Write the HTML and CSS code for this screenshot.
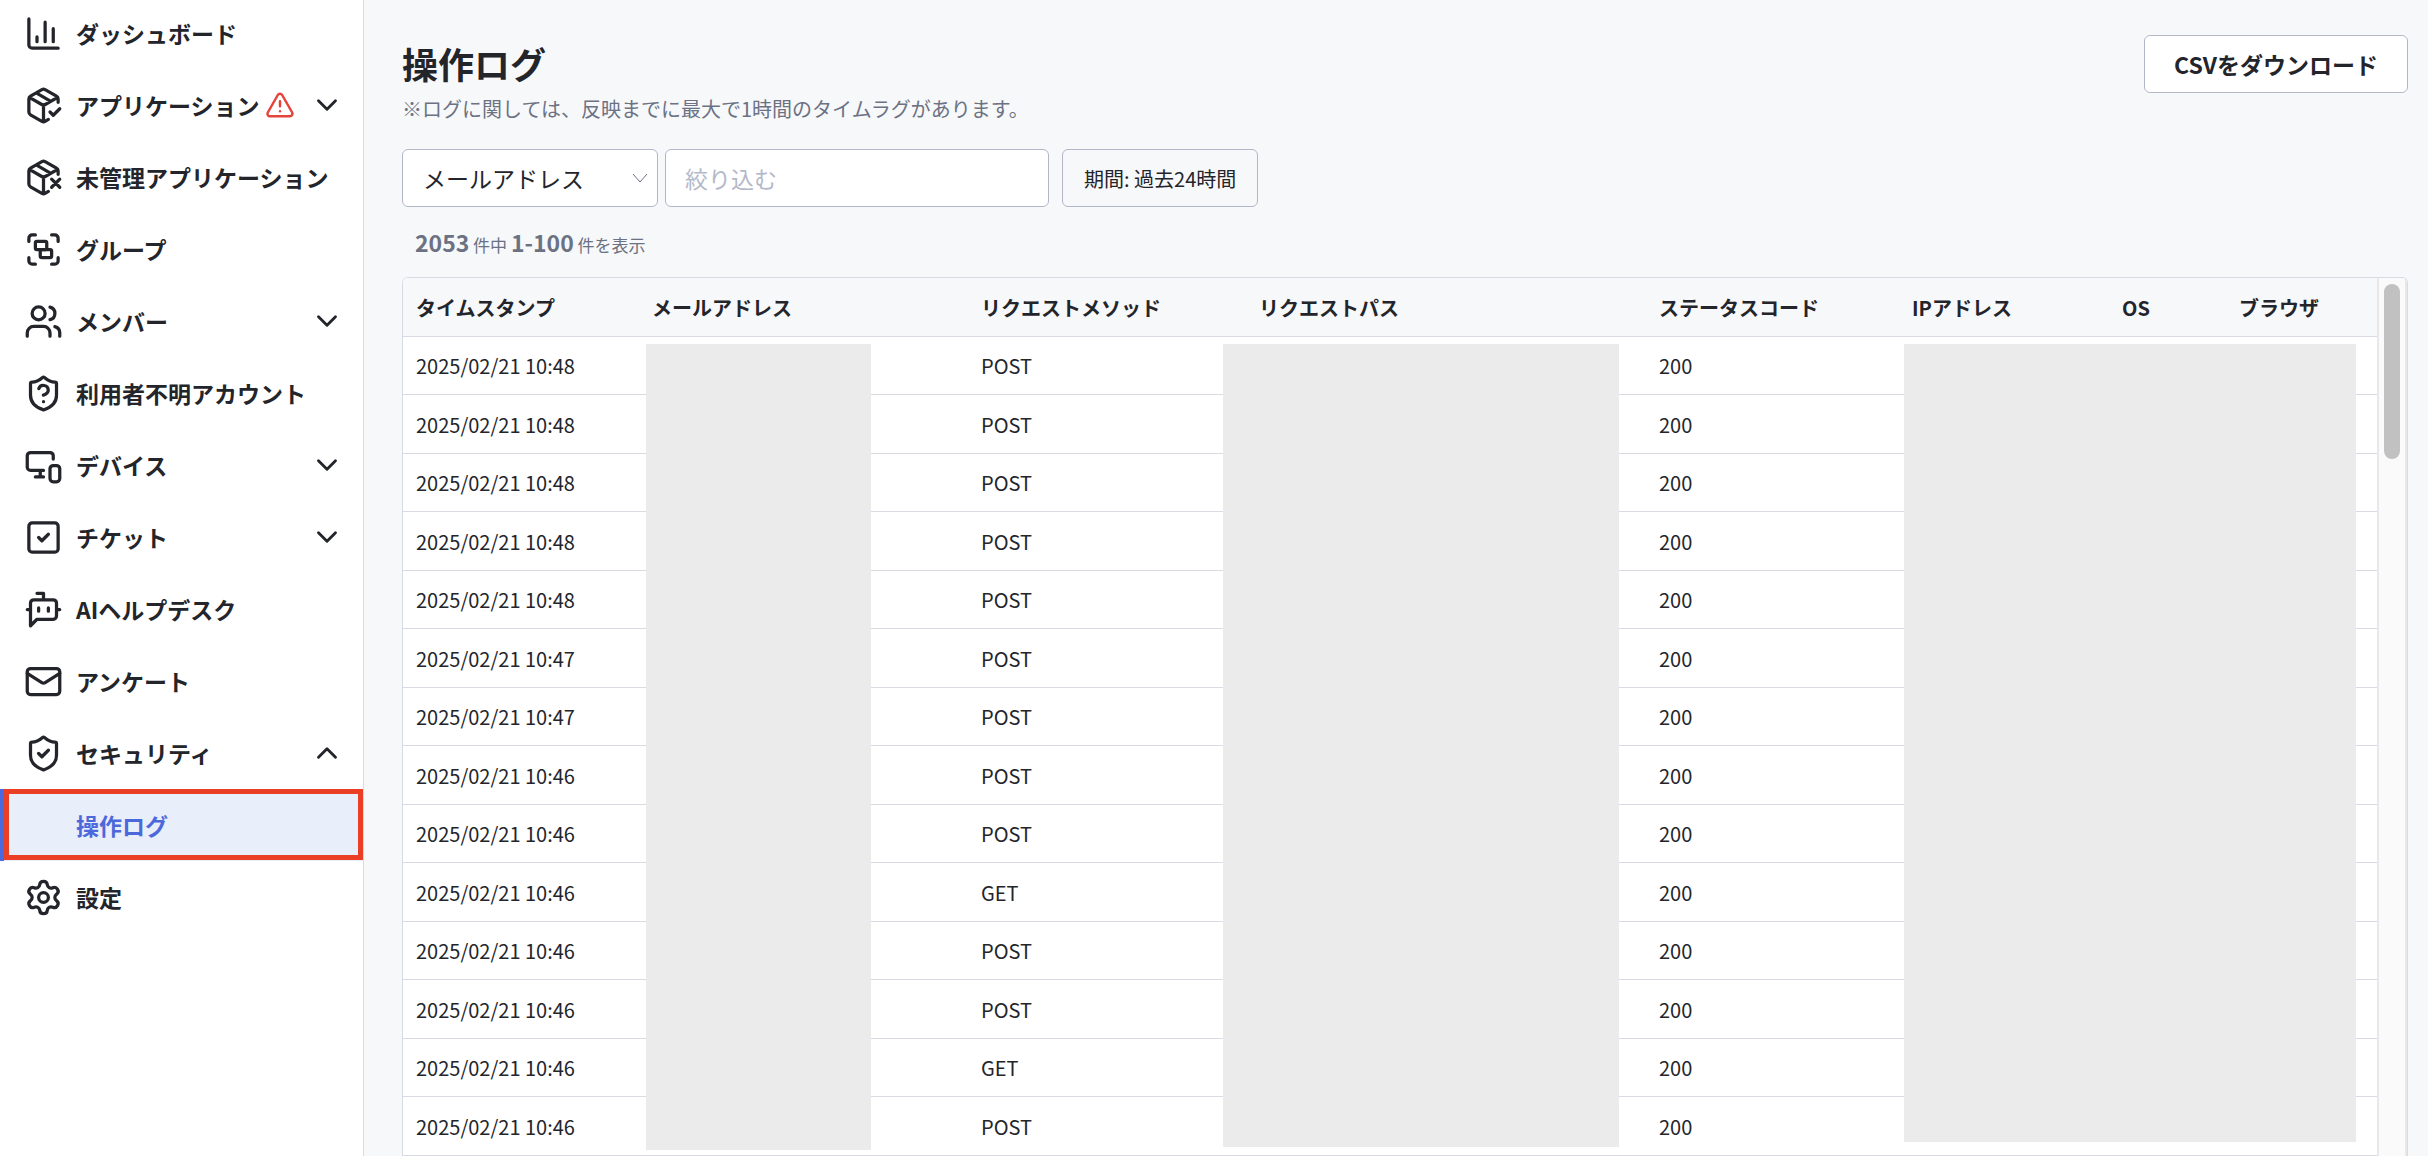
FILE: index.html
```html
<!DOCTYPE html>
<html lang="ja">
<head>
  <meta charset="UTF-8">
  <meta name="viewport" content="width=device-width, initial-scale=1.0">
  <title>操作ログ</title>
  <link rel="stylesheet" href="styles.css">
</head>
<body>
  <div class="layout">
    <!-- サイドバー -->
    <nav class="sidebar">
      <ul class="menu">
        <li>
          <a class="menu-item" href="#">
            <svg class="icon" viewBox="0 0 24 24"><path d="M3 3v16a2 2 0 0 0 2 2h16M18 17V9M13 17V5M8 17v-3"/></svg>
            <span>ダッシュボード</span>
          </a>
        </li>
        <li>
          <a class="menu-item" href="#">
            <svg class="icon" viewBox="0 0 24 24"><path d="m16 16 2 2 4-4M21 10V8a2 2 0 0 0-1-1.73l-7-4a2 2 0 0 0-2 0l-7 4A2 2 0 0 0 3 8v8a2 2 0 0 0 1 1.73l7 4a2 2 0 0 0 2 0l2-1.14M7.5 4.27l9 5.15M3.29 7 12 12l8.71-5M12 22V12"/></svg>
            <span>アプリケーション</span>
            <svg class="icon-alert" viewBox="0 0 24 24"><path d="m21.73 18-8-14a2 2 0 0 0-3.48 0l-8 14A2 2 0 0 0 4 21h16a2 2 0 0 0 1.73-3M12 9v4M12 17h.01"/></svg>
            <svg class="chevron" viewBox="0 0 24 24"><path d="m6 9 6 6 6-6"/></svg>
          </a>
        </li>
        <li>
          <a class="menu-item" href="#">
            <svg class="icon" viewBox="0 0 24 24"><path d="M21 10V8a2 2 0 0 0-1-1.73l-7-4a2 2 0 0 0-2 0l-7 4A2 2 0 0 0 3 8v8a2 2 0 0 0 1 1.73l7 4a2 2 0 0 0 2 0l2-1.14M7.5 4.27l9 5.15M3.29 7 12 12l8.71-5M12 22V12M17 13l5 5M17 18l5-5"/></svg>
            <span>未管理アプリケーション</span>
          </a>
        </li>
        <li>
          <a class="menu-item" href="#">
            <svg class="icon" viewBox="0 0 24 24"><path d="M3 7V5c0-1.1.9-2 2-2h2M17 3h2c1.1 0 2 .9 2 2v2M21 17v2c0 1.1-.9 2-2 2h-2M7 21H5c-1.1 0-2-.9-2-2v-2"/><rect x="7" y="7" width="7" height="5" rx="1"/><rect x="10" y="12" width="7" height="5" rx="1"/></svg>
            <span>グループ</span>
          </a>
        </li>
        <li>
          <a class="menu-item" href="#">
            <svg class="icon" viewBox="0 0 24 24"><path d="M16 21v-2a4 4 0 0 0-4-4H6a4 4 0 0 0-4 4v2M22 21v-2a4 4 0 0 0-3-3.87M16 3.13a4 4 0 0 1 0 7.75"/><circle cx="9" cy="7" r="4"/></svg>
            <span>メンバー</span>
            <svg class="chevron" viewBox="0 0 24 24"><path d="m6 9 6 6 6-6"/></svg>
          </a>
        </li>
        <li>
          <a class="menu-item" href="#">
            <svg class="icon" viewBox="0 0 24 24"><path d="M20 13c0 5-3.500 7.500-7.660 8.950a1 1 0 0 1-.67-.01C7.500 20.500 4 18 4 13V6a1 1 0 0 1 1-1c2 0 4.500-1.200 6.240-2.720a1.170 1.170 0 0 1 1.520 0C14.510 3.810 17 5 19 5a1 1 0 0 1 1 1zM9.100 9a3 3 0 0 1 5.820 1c0 2-3 3-3 3M12 17h.01"/></svg>
            <span>利用者不明アカウント</span>
          </a>
        </li>
        <li>
          <a class="menu-item" href="#">
            <svg class="icon" viewBox="0 0 24 24"><path d="M18 8V6a2 2 0 0 0-2-2H4a2 2 0 0 0-2 2v7a2 2 0 0 0 2 2h8M10 19v-4M7 19h5"/><rect x="16" y="12" width="6" height="10" rx="2"/></svg>
            <span>デバイス</span>
            <svg class="chevron" viewBox="0 0 24 24"><path d="m6 9 6 6 6-6"/></svg>
          </a>
        </li>
        <li>
          <a class="menu-item" href="#">
            <svg class="icon" viewBox="0 0 24 24"><rect x="3" y="3" width="18" height="18" rx="2"/><path d="m9 12 2 2 4-4"/></svg>
            <span>チケット</span>
            <svg class="chevron" viewBox="0 0 24 24"><path d="m6 9 6 6 6-6"/></svg>
          </a>
        </li>
        <li>
          <a class="menu-item" href="#">
            <svg class="icon" viewBox="0 0 24 24"><path d="M12 6V2H8M8 18l-4 4V8a2 2 0 0 1 2-2h12a2 2 0 0 1 2 2v8a2 2 0 0 1-2 2ZM2 12h2M9 11v2M15 11v2M20 12h2"/></svg>
            <span>AIヘルプデスク</span>
          </a>
        </li>
        <li>
          <a class="menu-item" href="#">
            <svg class="icon" viewBox="0 0 24 24"><rect x="2" y="4" width="20" height="16" rx="2"/><path d="m22 7-8.970 5.700a1.940 1.940 0 0 1-2.060 0L2 7"/></svg>
            <span>アンケート</span>
          </a>
        </li>
        <li>
          <a class="menu-item" href="#">
            <svg class="icon" viewBox="0 0 24 24"><path d="M20 13c0 5-3.500 7.500-7.660 8.950a1 1 0 0 1-.67-.01C7.500 20.500 4 18 4 13V6a1 1 0 0 1 1-1c2 0 4.500-1.200 6.240-2.720a1.170 1.170 0 0 1 1.520 0C14.510 3.810 17 5 19 5a1 1 0 0 1 1 1zM9 12l2 2 4-4"/></svg>
            <span>セキュリティ</span>
            <svg class="chevron" viewBox="0 0 24 24"><path d="m6 15 6-6 6 6"/></svg>
          </a>
          <ul class="submenu">
            <li><a class="menu-item active" href="#">操作ログ</a></li>
          </ul>
        </li>
        <li>
          <a class="menu-item" href="#">
            <svg class="icon" viewBox="0 0 24 24"><path d="M9.671 4.136a2.34 2.34 0 0 1 4.659 0 2.34 2.34 0 0 0 3.319 1.915 2.34 2.34 0 0 1 2.33 4.033 2.34 2.34 0 0 0 0 3.831 2.34 2.34 0 0 1-2.33 4.033 2.34 2.34 0 0 0-3.319 1.915 2.34 2.34 0 0 1-4.659 0 2.34 2.34 0 0 0-3.32-1.915 2.34 2.34 0 0 1-2.33-4.033 2.34 2.34 0 0 0 0-3.831A2.34 2.34 0 0 1 6.35 6.051a2.34 2.34 0 0 0 3.319-1.915"/><circle cx="12" cy="12" r="3"/></svg>
            <span>設定</span>
          </a>
        </li>
      </ul>
    </nav>

    <!-- メイン -->
    <main class="content">
      <header class="page-header">
        <div>
          <h1>操作ログ</h1>
          <p class="note">※ログに関しては、反映までに最大で1時間のタイムラグがあります。</p>
        </div>
        <button type="button" class="btn btn-csv">CSVをダウンロード</button>
      </header>

      <form class="filters">
        <div class="select-box">
          <select aria-label="検索項目">
            <option>メールアドレス</option>
          </select>
          <svg class="select-arrow" viewBox="0 0 16 16"><path d="m1 4 7 8 7-8"/></svg>
        </div>
        <input type="text" class="keyword" placeholder="絞り込む" aria-label="絞り込む">
        <button type="button" class="btn btn-period">期間: 過去24時間</button>
      </form>

      <p class="count"><strong>2053</strong> 件中 <strong>1-100</strong> 件を表示</p>

      <div class="table-box">
        <div class="table-scroll">
          <table>
            <colgroup>
              <col class="col-time">
              <col class="col-mail">
              <col class="col-method">
              <col class="col-path">
              <col class="col-status">
              <col class="col-ip">
              <col class="col-os">
              <col>
            </colgroup>
            <thead>
              <tr>
                <th>タイムスタンプ</th>
                <th>メールアドレス</th>
                <th>リクエストメソッド</th>
                <th>リクエストパス</th>
                <th>ステータスコード</th>
                <th>IPアドレス</th>
                <th>OS</th>
                <th>ブラウザ</th>
              </tr>
            </thead>
            <tbody>
              <tr><td>2025/02/21 10:48</td><td></td><td>POST</td><td></td><td>200</td><td></td><td></td><td></td></tr>
              <tr><td>2025/02/21 10:48</td><td></td><td>POST</td><td></td><td>200</td><td></td><td></td><td></td></tr>
              <tr><td>2025/02/21 10:48</td><td></td><td>POST</td><td></td><td>200</td><td></td><td></td><td></td></tr>
              <tr><td>2025/02/21 10:48</td><td></td><td>POST</td><td></td><td>200</td><td></td><td></td><td></td></tr>
              <tr><td>2025/02/21 10:48</td><td></td><td>POST</td><td></td><td>200</td><td></td><td></td><td></td></tr>
              <tr><td>2025/02/21 10:47</td><td></td><td>POST</td><td></td><td>200</td><td></td><td></td><td></td></tr>
              <tr><td>2025/02/21 10:47</td><td></td><td>POST</td><td></td><td>200</td><td></td><td></td><td></td></tr>
              <tr><td>2025/02/21 10:46</td><td></td><td>POST</td><td></td><td>200</td><td></td><td></td><td></td></tr>
              <tr><td>2025/02/21 10:46</td><td></td><td>POST</td><td></td><td>200</td><td></td><td></td><td></td></tr>
              <tr><td>2025/02/21 10:46</td><td></td><td>GET</td><td></td><td>200</td><td></td><td></td><td></td></tr>
              <tr><td>2025/02/21 10:46</td><td></td><td>POST</td><td></td><td>200</td><td></td><td></td><td></td></tr>
              <tr><td>2025/02/21 10:46</td><td></td><td>POST</td><td></td><td>200</td><td></td><td></td><td></td></tr>
              <tr><td>2025/02/21 10:46</td><td></td><td>GET</td><td></td><td>200</td><td></td><td></td><td></td></tr>
              <tr><td>2025/02/21 10:46</td><td></td><td>POST</td><td></td><td>200</td><td></td><td></td><td></td></tr>
            </tbody>
          </table>
          <!-- 個人情報のマスク -->
          <div class="mask mask-mail"></div>
          <div class="mask mask-path"></div>
          <div class="mask mask-client"></div>
        </div>
        <div class="scrollbar"><div class="scrollbar-thumb"></div></div>
      </div>
    </main>
  </div>
</body>
</html>
```

FILE: styles.css
```css
:root {
  --text: #23252b;
  --sub-text: #6b7283;
  --bg: #f7f8fa;
  --white: #ffffff;
  --border: #d8dbe3;
  --control-border: #b2b7c8;
  --primary: #4c68db;
  --primary-bg: #e8eefa;
  --danger: #e5443b;
  --mark: #ea3f25;
  --mask: #ebebeb;
}

* {
  margin: 0;
  padding: 0;
  box-sizing: border-box;
}

body {
  font-family: "Noto Sans CJK JP", "Noto Sans", sans-serif;
  font-size: 20px;
  color: var(--text);
  background-color: var(--bg);
}

.layout {
  display: flex;
  height: 100vh;
  overflow: hidden;
}

/* サイドバー */
.sidebar {
  flex: 0 0 364px;
  background-color: var(--white);
  border-right: 1px solid var(--border);
}

.menu {
  margin-top: -3px;
  list-style: none;
}

.submenu {
  list-style: none;
}

.menu-item {
  display: flex;
  align-items: center;
  gap: 13px;
  height: 72px;
  padding: 0 19px 0 24px;
  font-size: 23px;
  font-weight: 700;
  color: var(--text);
  text-decoration: none;
  white-space: nowrap;
}

.menu-item svg {
  flex: none;
  fill: none;
  stroke: currentColor;
  stroke-width: 2;
  stroke-linecap: round;
  stroke-linejoin: round;
}

.icon {
  width: 39px;
  height: 39px;
}

.menu-item .icon-alert {
  width: 30px;
  height: 30px;
  margin-left: -8px;
  color: var(--danger);
}

.menu-item .chevron {
  width: 34px;
  height: 34px;
  margin-left: auto;
}

.menu-item.active {
  position: relative;
  padding-left: 72px;
  color: var(--primary);
  background-color: var(--primary-bg);
  border-left: 4px solid var(--primary);
}

.menu-item.active::after {
  content: '';
  position: absolute;
  inset: 0 0 1px;
  border: 5px solid var(--mark);
}

/* メイン */
.content {
  flex: 1;
  min-width: 0;
  display: flex;
  flex-direction: column;
  padding: 35px 20px 0 38px;
}

.page-header {
  display: flex;
  justify-content: space-between;
  align-items: flex-start;
}

h1 {
  font-size: 36px;
  line-height: 56px;
}

.note {
  line-height: 36px;
  color: var(--sub-text);
}

.btn {
  height: 58px;
  border: 1px solid var(--control-border);
  border-radius: 6px;
  font-family: inherit;
  color: var(--text);
  white-space: nowrap;
  cursor: pointer;
}

.btn-csv {
  padding: 0 29px;
  font-size: 23px;
  font-weight: 700;
  background-color: var(--white);
}

.filters {
  display: flex;
  margin-top: 22px;
}

.select-box {
  position: relative;
  width: 256px;
}

.select-box select,
.keyword {
  width: 100%;
  height: 58px;
  padding: 0 20px;
  border: 1px solid var(--control-border);
  border-radius: 6px;
  font-family: inherit;
  font-size: 23px;
  color: var(--text);
  background-color: var(--white);
  appearance: none;
}

.select-arrow {
  position: absolute;
  top: 21px;
  right: 10px;
  width: 16px;
  height: 16px;
  fill: none;
  stroke: var(--sub-text);
  stroke-width: 1;
  pointer-events: none;
}

.filters .keyword {
  width: 384px;
  margin-left: 7px;
  padding: 0 19px;
}

.keyword::placeholder {
  color: #b4b9c9;
}

.btn-period {
  margin-left: 13px;
  padding: 0 21px;
  font-size: 20px;
  background-color: var(--bg);
}

.count {
  margin: 18px 0 15px 13px;
  font-size: 17px;
  line-height: 34px;
  color: var(--sub-text);
}

.count strong {
  font-size: 23px;
}

/* テーブル */
.table-box {
  flex: 1;
  min-height: 0;
  display: flex;
  border: 1px solid var(--border);
  border-bottom: none;
  border-radius: 6px 6px 0 0;
  overflow: hidden;
}

.table-scroll {
  position: relative;
  flex: 1;
  min-width: 0;
  background-color: var(--white);
}

table {
  width: 100%;
  table-layout: fixed;
  border-collapse: separate;
  border-spacing: 0;
}

.col-time { width: 236px; }
.col-mail { width: 329px; }
.col-method { width: 278px; }
.col-path { width: 400px; }
.col-status { width: 253px; }
.col-ip { width: 210px; }
.col-os { width: 117px; }

th,
td {
  height: 58px;
  padding: 0 13px;
  border-bottom: 1px solid var(--border);
  text-align: left;
  white-space: nowrap;
}

th {
  height: 59px;
  font-weight: 700;
  background-color: var(--bg);
}

tr:nth-child(even) td {
  height: 59px;
}

.mask {
  position: absolute;
  top: 66px;
  background-color: var(--mask);
}

.mask-mail {
  left: 243px;
  width: 225px;
  height: 806px;
}

.mask-path {
  left: 820px;
  width: 396px;
  height: 803px;
}

.mask-client {
  left: 1501px;
  right: 21px;
  height: 798px;
}

.scrollbar {
  flex: 0 0 30px;
  padding: 6px 5px;
  background-color: #fafafa;
  border: solid #e8e8e8;
  border-width: 0 2px;
}

.scrollbar-thumb {
  width: 16px;
  height: 175px;
  margin: 0 auto;
  border-radius: 8px;
  background-color: #c1c1c1;
}
```
